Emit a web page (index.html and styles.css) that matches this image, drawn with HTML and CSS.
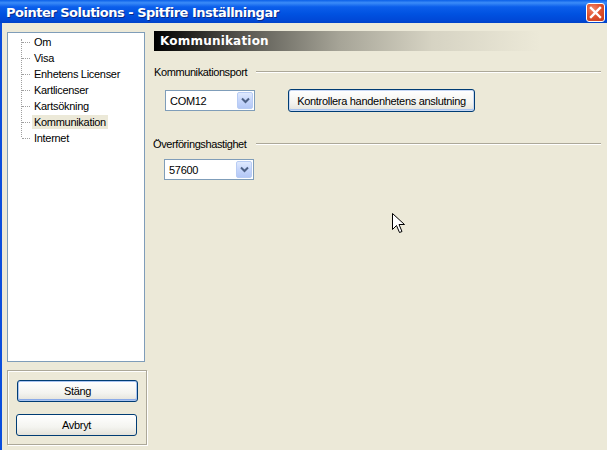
FILE: index.html
```html
<!DOCTYPE html>
<html>
<head>
<meta charset="utf-8">
<link rel="stylesheet" href="styles.css">
</head>
<body>
<div class="window">
  <div class="titlebar">
    <span class="title">Pointer Solutions - Spitfire Inställningar</span>
    <span class="close"><svg width="13" height="13" viewBox="0 0 13 13"><path d="M2 2 L11 11 M11 2 L2 11" stroke="#fff" stroke-width="2.4" stroke-linecap="square"/></svg></span>
  </div>
  <div class="body">
    <div class="side">
      <div class="tree">
        <div class="trunk"></div>
        <div class="item"><span class="stub"></span><span class="lbl">Om</span></div>
        <div class="item"><span class="stub"></span><span class="lbl">Visa</span></div>
        <div class="item"><span class="stub"></span><span class="lbl">Enhetens Licenser</span></div>
        <div class="item"><span class="stub"></span><span class="lbl">Kartlicenser</span></div>
        <div class="item"><span class="stub"></span><span class="lbl">Kartsökning</span></div>
        <div class="item"><span class="stub"></span><span class="lbl sel">Kommunikation</span></div>
        <div class="item"><span class="stub"></span><span class="lbl">Internet</span></div>
      </div>
      <div class="group">
        <button class="btn default">Stäng</button>
        <button class="btn alt">Avbryt</button>
      </div>
    </div>
    <div class="main">
      <div class="header">Kommunikation</div>
      <div class="section first">
        <span class="sec-label">Kommunikationsport</span><span class="rule"></span>
      </div>
      <div class="row r1">
        <div class="combo"><span class="val">COM12</span><span class="drop"><svg width="9" height="7" viewBox="0 0 9 7"><path d="M1 1.5 L4.5 5 L8 1.5" fill="none" stroke="#4D6185" stroke-width="2"/></svg></span></div>
        <button class="btn check">Kontrollera handenhetens anslutning</button>
      </div>
      <div class="section second">
        <span class="sec-label">Överföringshastighet</span><span class="rule"></span>
      </div>
      <div class="row r2">
        <div class="combo c2"><span class="val">57600</span><span class="drop"><svg width="9" height="7" viewBox="0 0 9 7"><path d="M1 1.5 L4.5 5 L8 1.5" fill="none" stroke="#4D6185" stroke-width="2"/></svg></span></div>
      </div>
    </div>
  </div>
  <svg class="cursor" width="14" height="22" viewBox="0 0 14 22"><path d="M0.5 0.5 L0.5 16.5 L4.5 12.5 L7.5 19.5 L10 18.5 L7 11.5 L12.5 11.5 Z" fill="#fff" stroke="#000" stroke-width="1"/></svg>
</div>
</body>
</html>
```
FILE: styles.css
```css
html, body {
  margin: 0;
  padding: 0;
  width: 607px;
  height: 450px;
  overflow: hidden;
  background: #ECE9D8;
  font-family: "Liberation Sans", Arial, sans-serif;
  font-size: 11px;
  color: #000;
}
.window {
  position: relative;
  width: 607px;
  height: 450px;
  display: flex;
  flex-direction: column;
}
.titlebar {
  height: 23px;
  flex: none;
  display: flex;
  align-items: center;
  justify-content: space-between;
  padding: 0 2px 0 6px;
  background: linear-gradient(to bottom, #0A5FE8 0%, #3B8CF8 12%, #0B5EEB 30%, #0052E1 60%, #0049D8 85%, #0042C8 100%);
}
.title {
  color: #fff;
  font-family: "DejaVu Sans", sans-serif;
  font-weight: bold;
  font-size: 13px;
  letter-spacing: -0.5px;
  text-shadow: 1px 1px 0 #0A2A88;
  margin-top: 1px;
}
.close {
  width: 19px;
  height: 19px;
  box-sizing: border-box;
  border: 1px solid #fff;
  border-radius: 3px;
  background: radial-gradient(circle at 35% 30%, #F0866A 0%, #E1532F 45%, #C3391C 100%);
  display: flex;
  align-items: center;
  justify-content: center;
  margin-top: 1px;
}
.body {
  flex: 1;
  display: flex;
  border-left: 2px solid #0A4DDC;
  padding: 9px 0 0 5px;
}
.side {
  width: 140px;
  display: flex;
  flex-direction: column;
}
.tree {
  position: relative;
  width: 138px;
  height: 330px;
  box-sizing: border-box;
  border: 1px solid #7F9DB9;
  background: #fff;
  padding: 1px 0 0 0;
}
.trunk {
  position: absolute;
  left: 13px;
  top: 6px;
  height: 98px;
  border-left: 1px dotted #A0A0A0;
}
.item {
  height: 16px;
  display: flex;
  align-items: center;
}
.stub {
  width: 8px;
  margin-left: 14px;
  border-top: 1px dotted #A0A0A0;
}
.lbl {
  margin-left: 2px;
  padding: 1px 2px;
  letter-spacing: -0.3px;
}
.lbl.sel {
  background: #ECE9D8;
}
.group {
  margin-top: 8px;
  width: 140px;
  height: 75px;
  box-sizing: border-box;
  border: 1px solid #ACA899;
  box-shadow: inset 1px 1px 0 #fff, 1px 1px 0 #fff;
  display: flex;
  flex-direction: column;
  align-items: flex-start;
  padding: 9px 0 0 8px;
  gap: 12px;
}
.btn {
  font-family: "Liberation Sans", Arial, sans-serif;
  font-size: 11px;
  letter-spacing: -0.3px;
  color: #000;
  border: 1px solid #003C74;
  border-radius: 3px;
  background: linear-gradient(to bottom, #FFFFFF 0%, #F4F4F0 60%, #E3E2DA 100%);
  padding: 0;
  margin: 0;
  box-sizing: border-box;
}
.group .btn {
  width: 121px;
  height: 22px;
}
.btn.default {
  margin-left: 1px;
  box-shadow: inset 0 0 0 1px #A9C4F1, inset 0 -1px 0 1px #8BABE8;
}
.main {
  flex: 1;
  padding: 0 6px 0 7px;
  display: flex;
  flex-direction: column;
}
.header {
  height: 20px;
  box-sizing: border-box;
  padding: 3px 0 0 6px;
  margin-top: -1px;
  width: 386px;
  color: #fff;
  font-family: "DejaVu Sans", sans-serif;
  font-weight: bold;
  font-size: 12px;
  letter-spacing: 0.2px;
  background: linear-gradient(to right, #000 0%, #5E5D56 25%, #A6A497 48%, #D6D3C3 72%, #ECE9D8 100%);
}
.section {
  display: flex;
  align-items: center;
  height: 14px;
}
.section.first { margin-top: 14px; }
.section.second { margin-top: 25px; margin-left: -1px; }
.sec-label {
  letter-spacing: -0.4px;
  padding-right: 6px;
}
.rule {
  flex: 1;
  border-top: 1px solid #ACA899;
  border-bottom: 1px solid #fff;
  margin-left: 3px;
}
.row {
  display: flex;
  align-items: center;
  padding-left: 11px;
}
.row.r1 { margin-top: 10px; }
.row.r2 { margin-top: 8px; }
.c2 { margin-left: -1px; }
.combo {
  width: 90px;
  height: 21px;
  box-sizing: border-box;
  border: 1px solid #7F9DB9;
  background: #fff;
  display: flex;
  align-items: center;
  justify-content: space-between;
  padding: 1px;
}
.val {
  padding-left: 3px;
  letter-spacing: -0.3px;
}
.drop {
  width: 16px;
  height: 17px;
  box-sizing: border-box;
  border: 1px solid #B8CCF4;
  border-radius: 2px;
  background: linear-gradient(to bottom, #E0EAFE 0%, #C6D6FB 50%, #B4C8F6 100%);
  display: flex;
  align-items: center;
  justify-content: center;
}
.btn.check {
  margin-left: 33px;
  width: 187px;
  height: 23px;
  box-shadow: inset 0 0 0 1px #C8D8F4, inset 0 -1px 0 1px #A9C4F1;
}
.cursor {
  position: absolute;
  left: 392px;
  top: 213px;
}
```
